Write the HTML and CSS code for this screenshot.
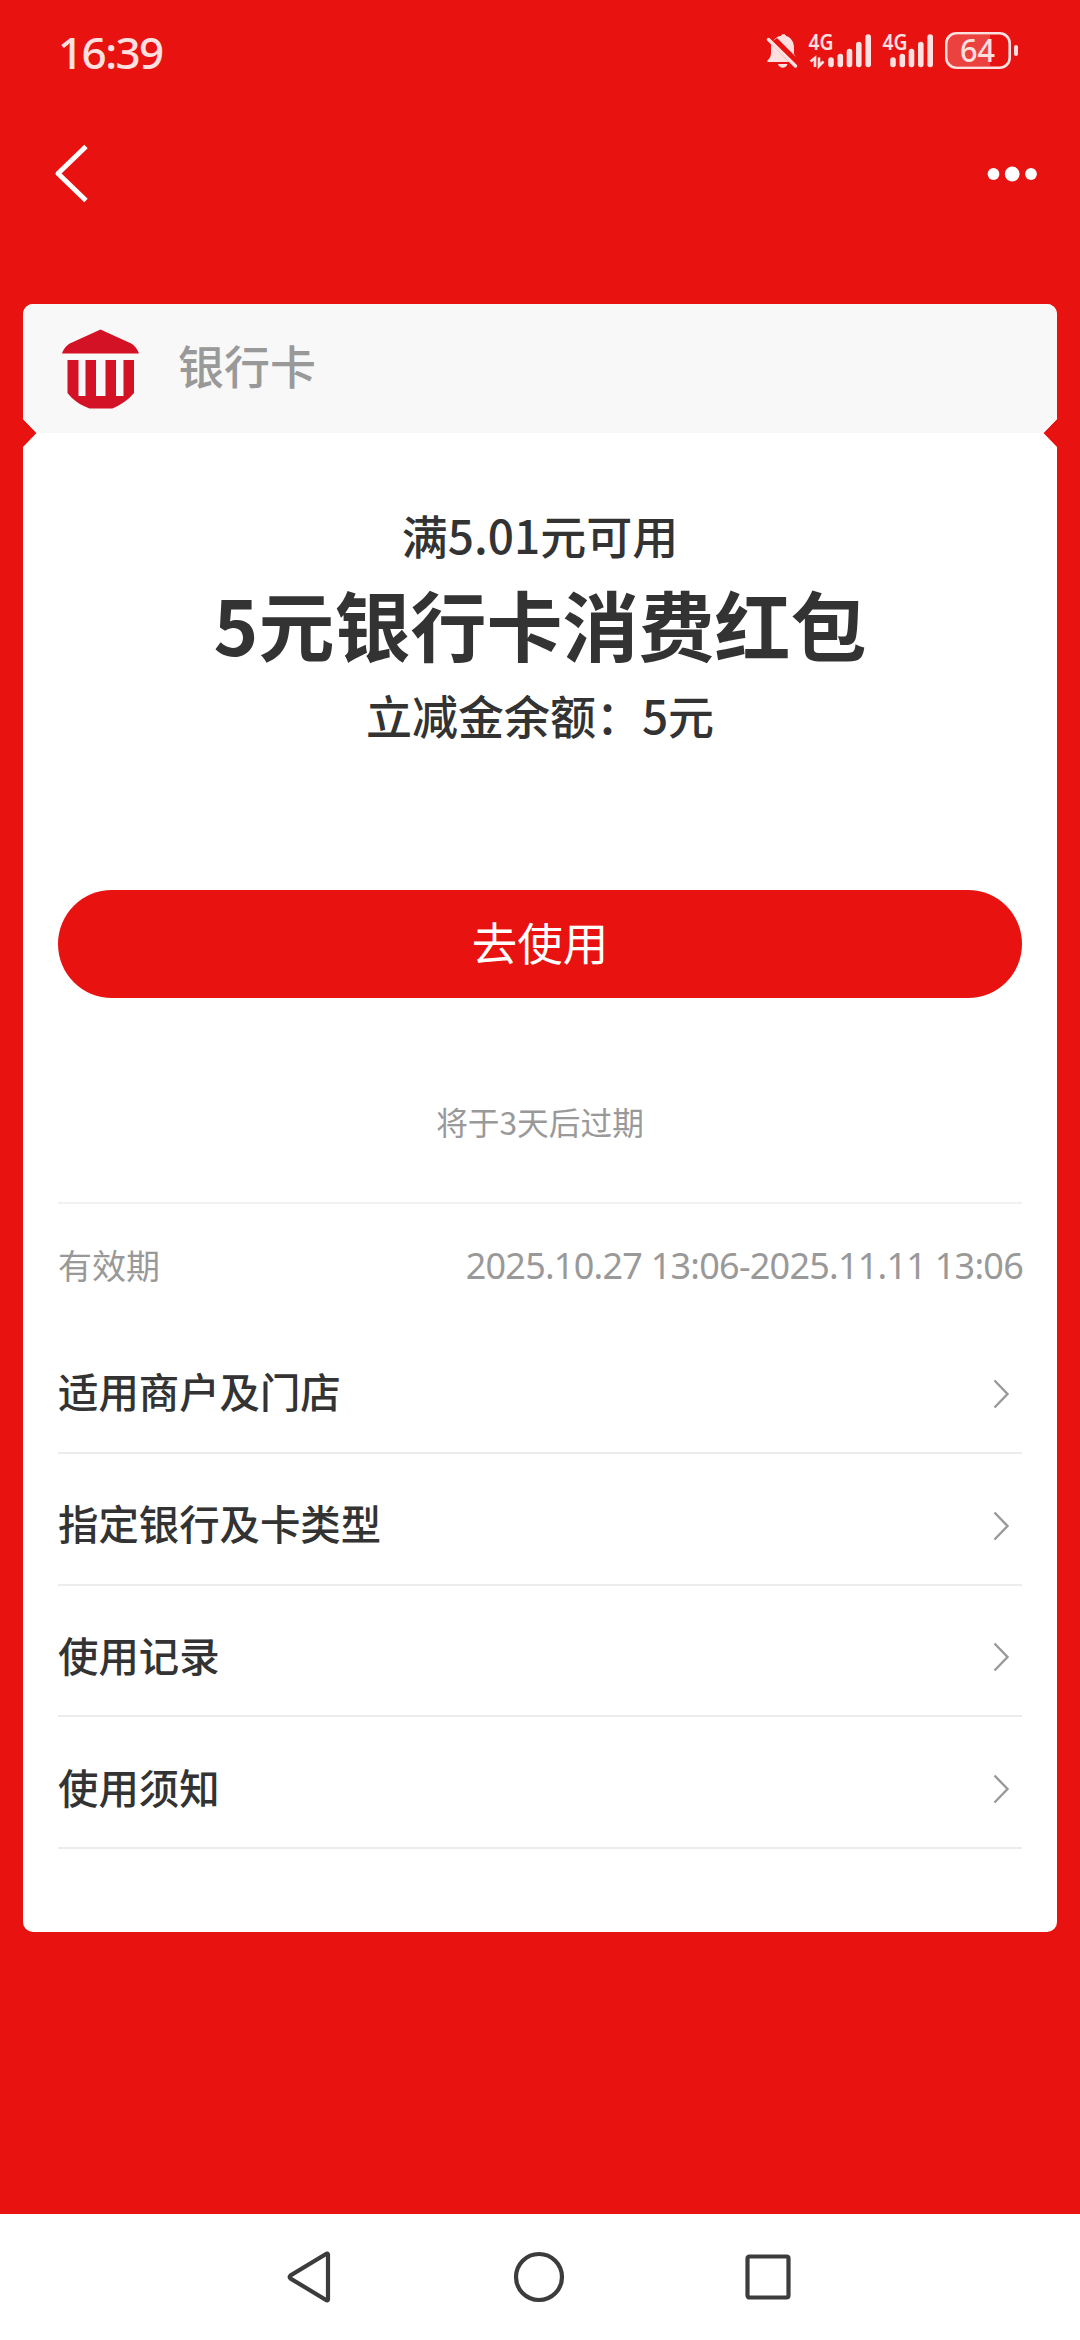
FILE: index.html
```html
<!DOCTYPE html>
<html lang="zh-CN">
<head>
<meta charset="utf-8">
<title>银行卡消费红包</title>
<link rel="stylesheet" href="styles.css">
</head>
<body>
<div class="screen">
  <header class="status">
    <span class="time">16:39</span>
    <svg class="status-icons" width="256" height="84" viewBox="764 10 256 84">
      <path class="tint" d="M773 41C776 37 779 36 781 36C781 33.500 786 33.500 786 36C791 37 794 42 794 48V54L796 57L777 38Z M771 44L789 62H767.500V60.500C770 58 771 56 771 53Z M778 64H787.500C786 69 779.500 69 778 64Z"/>
      <path class="slash" d="M768.500 39.500L795.500 66"/>
      <text class="net" x="808.500" y="50" textLength="25" lengthAdjust="spacingAndGlyphs">4G</text>
      <path class="arrows" d="M810.500 61.500L815 58V67M819 57.500V66L823.500 61.500"/>
      <path class="bars" d="M831 60V64.500M840.300 56.500V64.500M849.500 51.500V64.500M858.800 44.500V64.500M868.200 37V64.500"/>
      <text class="net" x="882.500" y="50" textLength="25" lengthAdjust="spacingAndGlyphs">4G</text>
      <path class="bars" d="M893 60V64.500M902.300 56.500V64.500M911.500 51.500V64.500M920.800 44.500V64.500M930.200 37V64.500"/>
      <path class="charge" d="M956 35H990V66H956Q948 66 948 58V43Q948 35 956 35Z"/>
      <rect class="cell" x="946.300" y="33.300" width="63.400" height="34.400" rx="10"/>
      <rect class="tint" x="1014" y="45" width="4" height="11" rx="2"/>
      <text class="level" x="960" y="62" textLength="35" lengthAdjust="spacingAndGlyphs">64</text>
    </svg>
  </header>

  <nav class="topbar">
    <svg width="36" height="60" viewBox="0 0 36 60"><path class="back" d="M33 2.500L5 29.500L33 56.500"/></svg>
    <svg width="52" height="20" viewBox="0 0 52 20"><g class="dots"><circle cx="8.500" cy="10" r="5.900"/><circle cx="27.200" cy="10" r="7.400"/><circle cx="46" cy="10" r="5.900"/></g></svg>
  </nav>

  <main class="card">
    <div class="card-head">
      <svg class="bank" width="78" height="80" viewBox="0 0 78 80"><path d="M0 24.500C2 19 5 15.500 10 13.500L38.500 0.500L67 13.500C72 15.500 75 19 77 24.500Z M5.500 31H16.500V67H23.500V31H34V67H43.500V31H54V67H61.500V31H72V64C66 71 59 76 50.500 79.500H27.500C18 76 11 71 5.500 64Z"/></svg>
      <span>银行卡</span>
    </div>
    <section class="offer">
      <p class="line">满5.01元可用</p>
      <h1 class="title">5元银行卡消费红包</h1>
      <p class="line balance">立减金余额：5元</p>
    </section>
    <div class="body">
      <button class="use">去使用</button>
      <p class="expiry">将于3天后过期</p>
      <div class="validity"><span class="label">有效期</span><span class="dates">2025.10.27 13:06-2025.11.11 13:06</span></div>
      <ul class="menu">
        <li><span>适用商户及门店</span><svg class="more" width="17" height="30" viewBox="0 0 17 30"><path d="M1.500 1.500L14.500 15L1.500 28.500"/></svg></li>
        <li><span>指定银行及卡类型</span><svg class="more" width="17" height="30" viewBox="0 0 17 30"><path d="M1.500 1.500L14.500 15L1.500 28.500"/></svg></li>
        <li><span>使用记录</span><svg class="more" width="17" height="30" viewBox="0 0 17 30"><path d="M1.500 1.500L14.500 15L1.500 28.500"/></svg></li>
        <li><span>使用须知</span><svg class="more" width="17" height="30" viewBox="0 0 17 30"><path d="M1.500 1.500L14.500 15L1.500 28.500"/></svg></li>
      </ul>
    </div>
  </main>

  <footer class="sysnav">
    <svg width="52" height="54" viewBox="0 0 52 54"><path d="M43 4.500V49.500Q42.500 51 41 50L5.500 28.500Q4 27 5.500 25.500L41 4Q42.500 3 43 4.500Z"/></svg>
    <svg width="54" height="54" viewBox="0 0 54 54"><circle cx="27" cy="27" r="23"/></svg>
    <svg width="54" height="54" viewBox="0 0 54 54"><rect x="6.500" y="6.500" width="41" height="41" rx="2"/></svg>
  </footer>
</div>
</body>
</html>
```
FILE: styles.css
```css
* { box-sizing: border-box; }
body { margin: 0; }
p, h1, ul { margin: 0; padding: 0; }
svg { display: block; flex: none; }
.screen {
  width: 1080px;
  height: 2340px;
  display: flex;
  flex-direction: column;
  background: #e81310;
  font-family: "Noto Sans CJK SC", sans-serif;
  color: #333;
  overflow: hidden;
}

.status {
  height: 104px;
  padding: 0 60px 0 58px;
  display: flex;
  align-items: center;
  justify-content: space-between;
}
.time {
  font: 500 44px/60px "Noto Sans", sans-serif;
  letter-spacing: -1.6px;
  color: #ffe0e0;
}
.tint { fill: #ffe0e0; }
.slash { fill: none; stroke: #ffe0e0; stroke-width: 3.5; stroke-linecap: round; }
.net { font: 600 22px "Noto Sans", sans-serif; fill: #ffe0e0; }
.arrows { fill: none; stroke: #ffe0e0; stroke-width: 2.6; }
.bars { fill: none; stroke: #ffe0e0; stroke-width: 5.6; stroke-linecap: round; }
.charge { fill: rgba(255, 255, 255, .2); }
.cell { fill: none; stroke: #ffe0e0; stroke-width: 2.6; }
.level { font: 500 32px "Noto Sans", sans-serif; fill: #ffe0e0; }

.topbar {
  height: 140px;
  padding: 0 43px 0 53px;
  display: flex;
  align-items: center;
  justify-content: space-between;
}
.back { fill: none; stroke: #fff; stroke-width: 5; stroke-linejoin: round; }
.dots { fill: #fff; }

.card {
  width: 1034px;
  height: 1628px;
  margin: 60px 23px 0;
  border-radius: 10px;
  background: #fff;
  clip-path: polygon(0 0, 100% 0, 100% 115px, 1020.5px 129px, 100% 143px, 100% 100%, 0 100%, 0 143px, 13.500px 129px, 0 115px);
}
.card-head {
  height: 129px;
  padding-left: 39px;
  display: flex;
  align-items: center;
  gap: 38px;
  border-radius: 10px 10px 0 0;
  background: #f8f8f8;
  color: #999;
  font-size: 46px;
  font-weight: 500;
}
.card-head span { line-height: 60px; margin-bottom: 10px; }
.bank { fill: #d31325; }
.offer {
  height: 457px;
  padding-top: 71px;
  text-align: center;
}
.line { font-size: 46px; line-height: 60px; font-weight: 500; }
.title { font-size: 76px; line-height: 118px; font-weight: 700; }
.balance { line-height: 64px; }

.body { padding: 0 35px; }
.use {
  display: block;
  width: 100%;
  height: 108px;
  border: 0;
  border-radius: 54px;
  padding: 0 0 6px;
  background: #e81310;
  color: #fff;
  font: 400 45.5px/60px "Noto Sans CJK SC", sans-serif;
}
.expiry {
  height: 206px;
  padding-top: 98px;
  border-bottom: 2px solid #f2f2f2;
  text-align: center;
  font-size: 31.700px;
  line-height: 50px;
  color: #999;
}
.validity {
  height: 118px;
  display: flex;
  align-items: center;
  justify-content: space-between;
  padding-top: 6px;
  font-size: 34px;
  line-height: 50px;
  color: #999;
}
.label { margin-bottom: 2px; }
.dates { font-family: "Noto Sans", sans-serif; font-size: 36px; letter-spacing: -.76px; margin-right: -1px; }
.menu { list-style: none; }
.menu li {
  height: 131.750px;
  display: flex;
  align-items: center;
  justify-content: space-between;
  padding: 14px 12px 0 0;
  border-bottom: 2px solid #ececec;
  font-size: 40.4px;
  line-height: 60px;
  font-weight: 500;
}
.menu span { margin-bottom: 5px; }
.more { fill: none; stroke: #999; stroke-width: 2.4; }

.sysnav {
  height: 126px;
  margin-top: auto;
  display: flex;
  align-items: center;
  justify-content: center;
  gap: 175px;
  background: #fff;
}
.sysnav svg { fill: none; stroke: #3c3c3c; stroke-width: 4.2; }
```
